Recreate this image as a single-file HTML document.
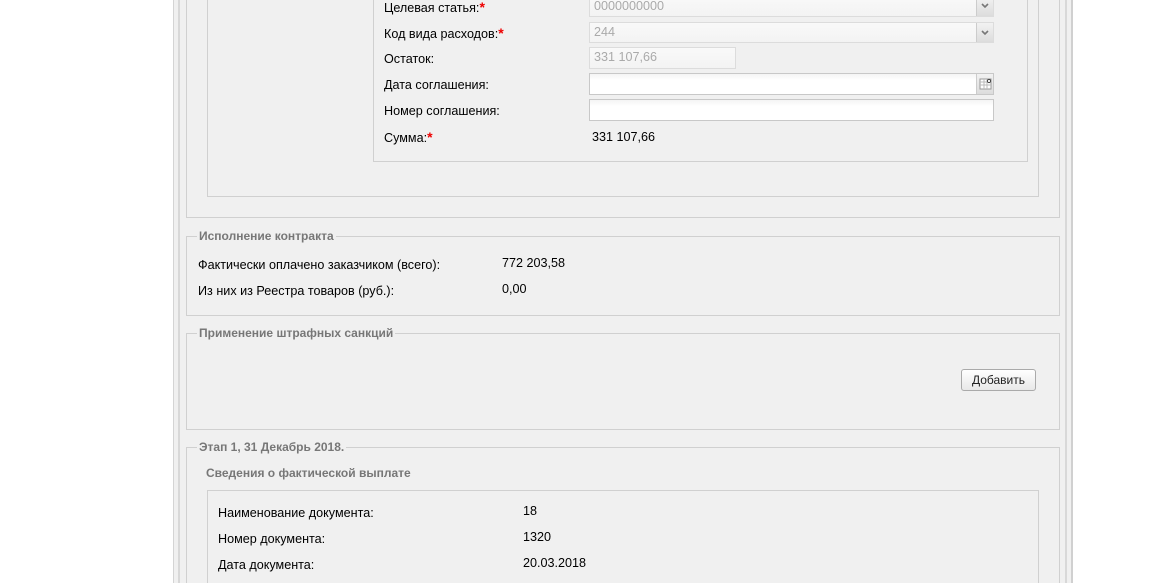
<!DOCTYPE html>
<html style="overflow:hidden;height:583px"><head><meta charset="utf-8"><style>
body{margin:0;width:1168px;height:583px;background:#fff;position:relative;overflow:hidden;font-family:"Liberation Sans","DejaVu Sans",sans-serif;font-size:12.6px;color:#000}
.a{position:absolute}
.bx{position:absolute;border:1px solid #d0d0d0;box-sizing:border-box}
.lg{position:absolute;background:#f0f0f0;color:#777;font-weight:bold;font-size:12px;padding:0 2px;line-height:14px}
.t{position:absolute;line-height:14px}
.inp{position:absolute;box-sizing:border-box;border:1px solid #c8c8c8;background:#fff;color:#aaa;padding-left:4px;line-height:19px;font-size:12.6px}
.dis{background:linear-gradient(#f9f9f9,#f3f3f3);border-color:#dcdcdc}
.trig{position:absolute;right:0;top:0;width:17px;height:100%;border-left:1px solid #ccc;background:linear-gradient(#f2f2f2,#dcdcdc);box-sizing:border-box}
.r{color:#e00;font-weight:bold;font-size:14px}
</style></head><body>
<div class="a" style="left:173px;top:0;width:900px;height:583px;background:#f0f0f0"></div>
<div class="a" style="left:173px;top:0;width:1px;height:583px;background:#d4d4d4"></div>
<div class="a" style="left:178px;top:0;width:2px;height:583px;background:#d8d8d8"></div>
<div class="a" style="left:1065px;top:0;width:2px;height:583px;background:#d8d8d8"></div>
<div class="a" style="left:1071px;top:0;width:2px;height:583px;background:#d0d0d0"></div>

<div class="bx" style="left:186px;top:-5px;width:874px;height:223px"></div>
<div class="bx" style="left:207px;top:-5px;width:832px;height:202px"></div>
<div class="bx" style="left:373px;top:-5px;width:655px;height:167px"></div>

<div class="t" style="left:384px;top:0">Целевая статья:<span class="r">*</span></div>
<div class="inp dis" style="left:589px;top:-4px;width:405px;height:21px">0000000000<div class="trig"><svg width="16" height="19" style="position:absolute;left:0;top:0"><path d="M5 7l3 3 3-3" stroke="#777" stroke-width="1.6" fill="none"/></svg></div></div>
<div class="t" style="left:384px;top:26px">Код вида расходов:<span class="r">*</span></div>
<div class="inp dis" style="left:589px;top:22px;width:405px;height:21px">244<div class="trig"><svg width="16" height="19" style="position:absolute;left:0;top:0"><path d="M5 8l3 3 3-3" stroke="#777" stroke-width="1.6" fill="none"/></svg></div></div>
<div class="t" style="left:384px;top:52px">Остаток:</div>
<div class="inp dis" style="left:589px;top:47px;width:147px;height:22px">331 107,66</div>
<div class="t" style="left:384px;top:78px">Дата соглашения:</div>
<div class="inp" style="left:589px;top:73px;width:405px;height:22px;background:linear-gradient(#f4f4f4,#fff 30%)"><div class="trig"><svg width="16" height="20" style="position:absolute;left:0;top:0"><rect x="3" y="5" width="11" height="10" fill="#fff" stroke="#999"/><path d="M3 8h11M3 11h11M7 5v10M10 5v10" stroke="#bbb"/><circle cx="12" cy="7" r="1.6" fill="#fff" stroke="#444"/></svg></div></div>
<div class="t" style="left:384px;top:104px">Номер соглашения:</div>
<div class="inp" style="left:589px;top:99px;width:405px;height:22px;background:linear-gradient(#f4f4f4,#fff 30%)"></div>
<div class="t" style="left:384px;top:130px">Сумма:<span class="r">*</span></div>
<div class="t" style="left:592px;top:130px">331 107,66</div>

<div class="bx" style="left:186px;top:236px;width:874px;height:80px"></div>
<div class="lg" style="left:197px;top:229px">Исполнение контракта</div>
<div class="t" style="left:198px;top:258px">Фактически оплачено заказчиком (всего):</div>
<div class="t" style="left:502px;top:256px">772 203,58</div>
<div class="t" style="left:198px;top:284px">Из них из Реестра товаров (руб.):</div>
<div class="t" style="left:502px;top:282px">0,00</div>

<div class="bx" style="left:186px;top:333px;width:874px;height:97px"></div>
<div class="lg" style="left:197px;top:326px">Применение штрафных санкций</div>
<div class="a" style="left:961px;top:369px;width:75px;height:22px;box-sizing:border-box;border:1px solid #aaa;border-radius:3px;background:linear-gradient(#fff,#e8e8e8);text-align:center;line-height:20px;color:#222;font-size:12px">Добавить</div>

<div class="bx" style="left:186px;top:447px;width:874px;height:140px"></div>
<div class="lg" style="left:197px;top:440px">Этап 1, 31 Декабрь 2018.</div>
<div class="t" style="left:206px;top:466px;color:#777;font-weight:bold;font-size:12px">Сведения о фактической выплате</div>
<div class="bx" style="left:207px;top:490px;width:832px;height:100px"></div>
<div class="t" style="left:218px;top:506px">Наименование документа:</div>
<div class="t" style="left:523px;top:504px">18</div>
<div class="t" style="left:218px;top:532px">Номер документа:</div>
<div class="t" style="left:523px;top:530px">1320</div>
<div class="t" style="left:218px;top:558px">Дата документа:</div>
<div class="t" style="left:523px;top:556px">20.03.2018</div>
</body></html>
